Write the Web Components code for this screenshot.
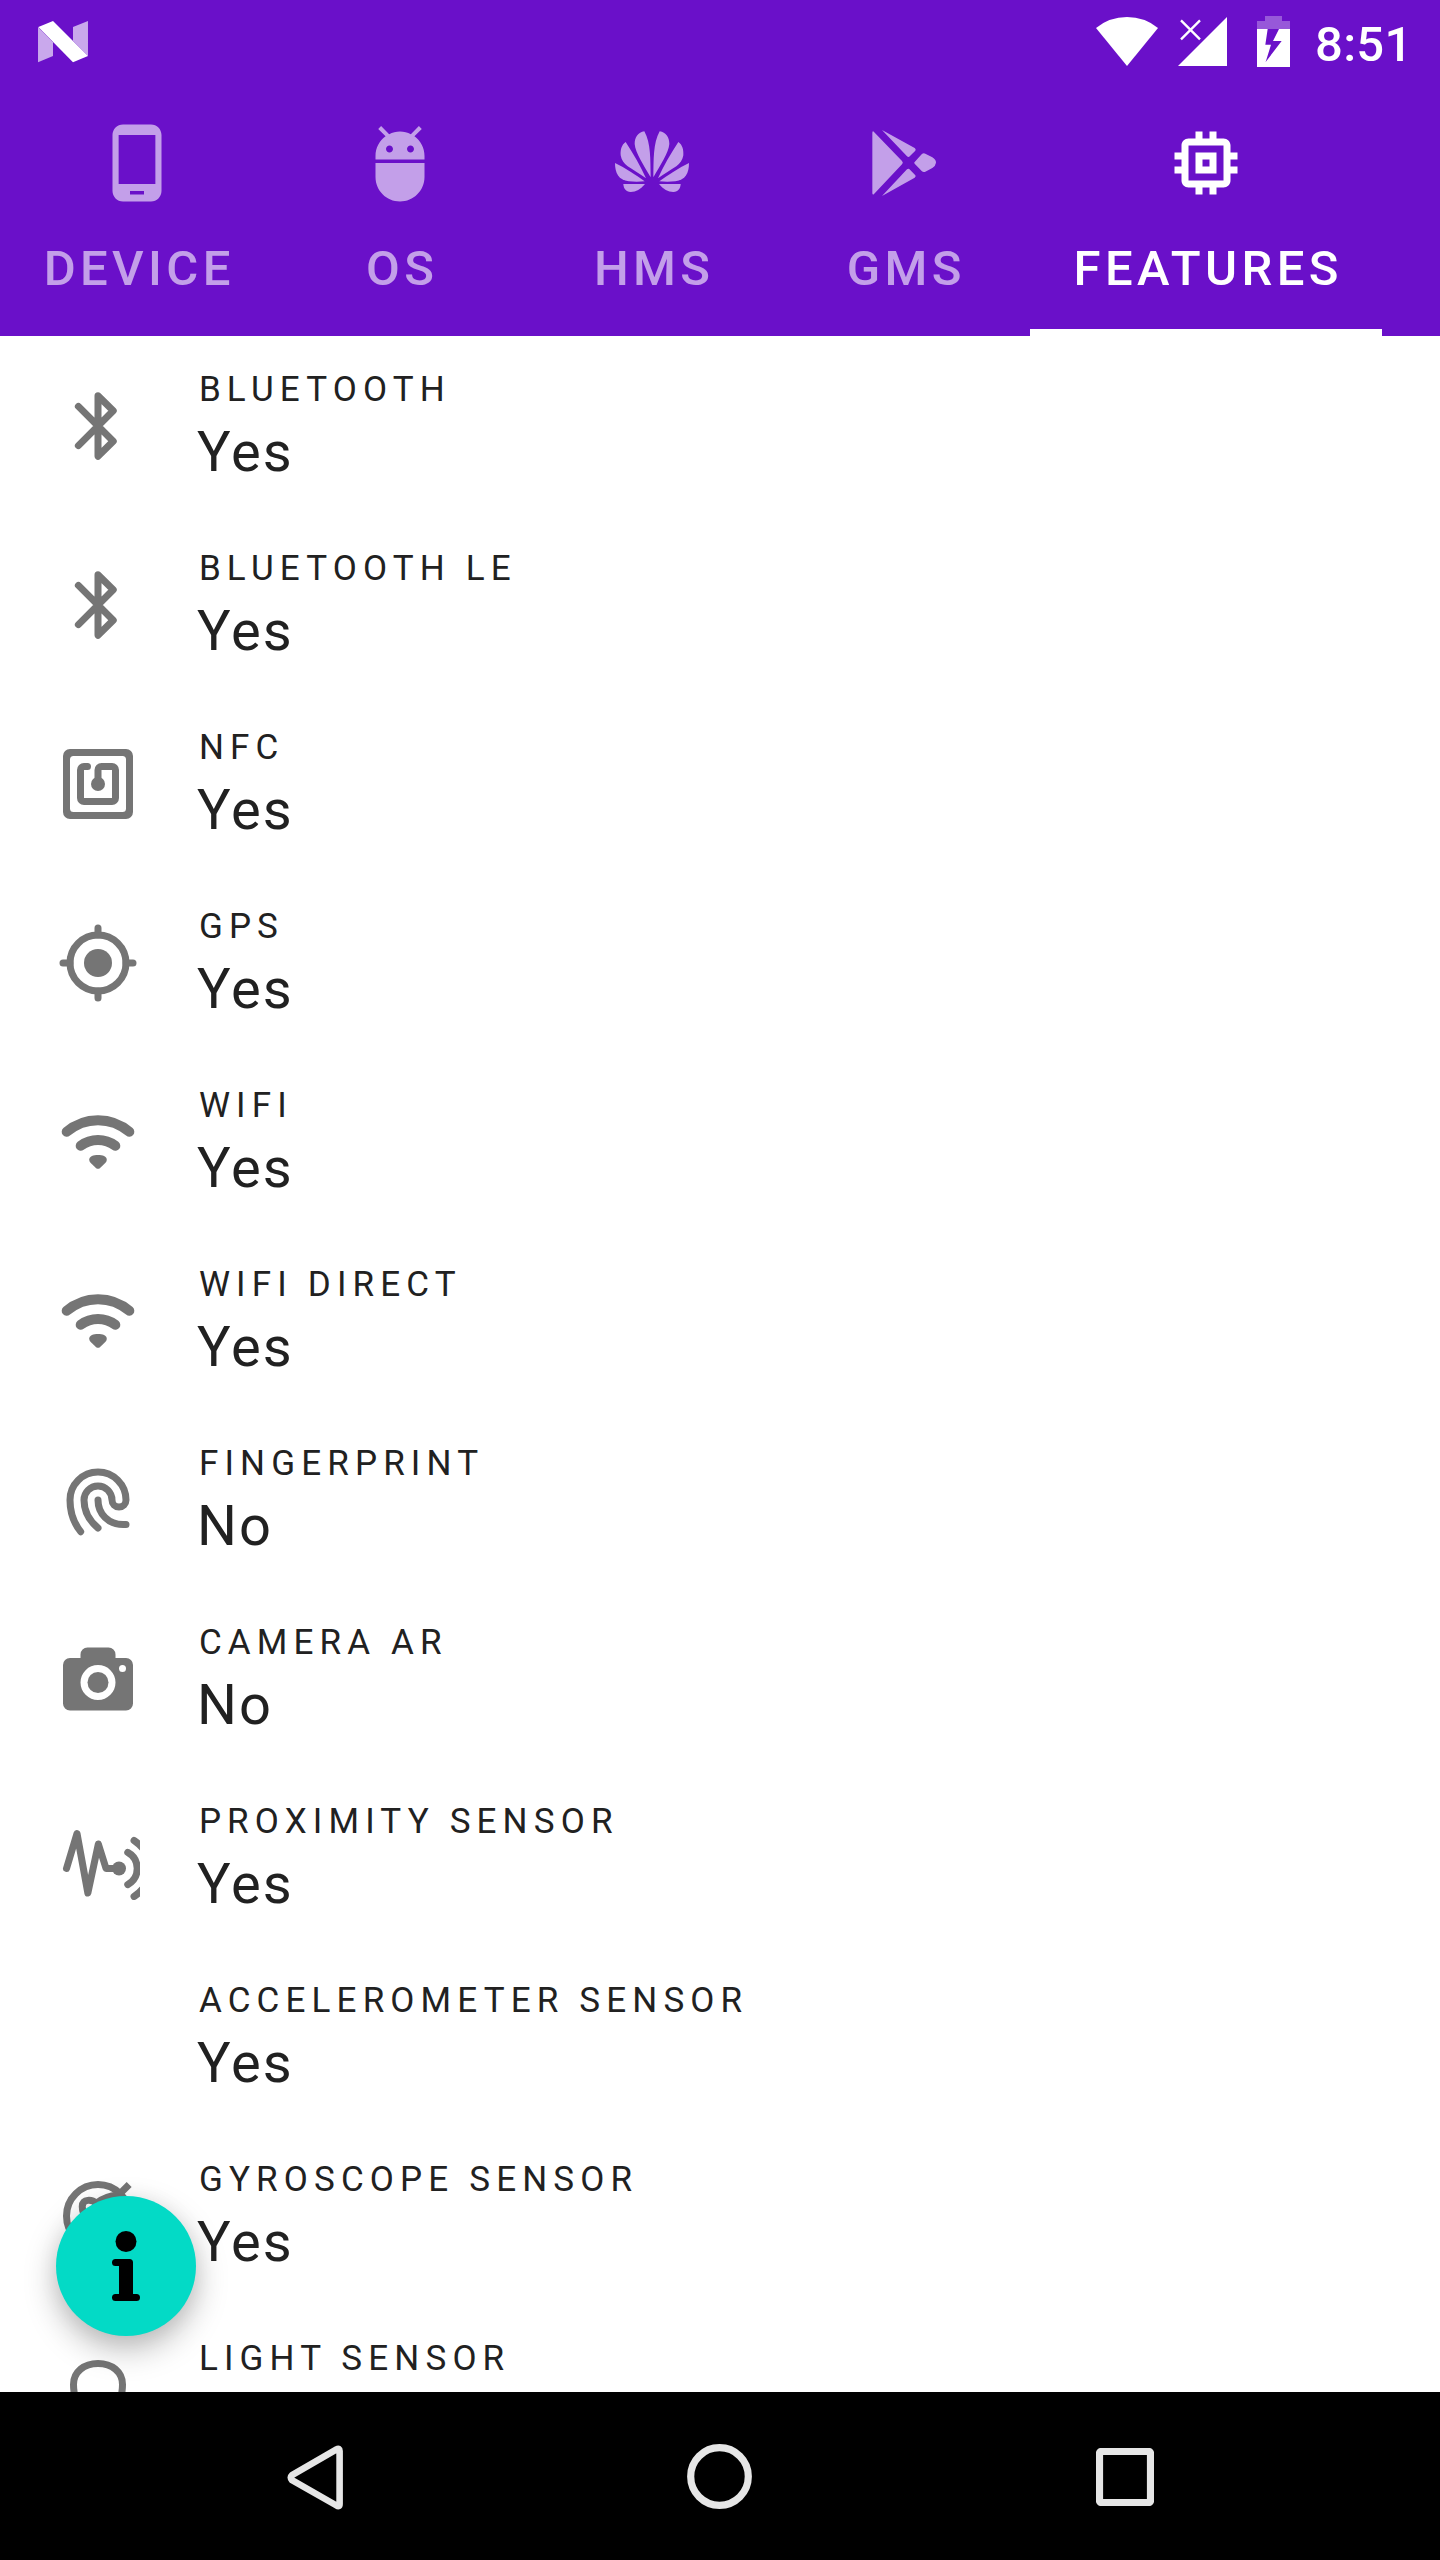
<!DOCTYPE html>
<html lang="en">
<head>
<meta charset="utf-8">
<title>Features</title>
<style>
html,body{margin:0;padding:0;background:#fff}
body{width:1440px;height:2560px;overflow:hidden;font-family:Roboto,"Noto Sans",sans-serif}
</style>
</head>
<body>
<app-screen></app-screen>
<script>
const ICONS={
phone:['0 0 24 24','<path d="M16 1H8C6.34 1 5 2.34 5 4v16c0 1.66 1.34 3 3 3h8c1.66 0 3-1.34 3-3V4c0-1.66-1.34-3-3-3zm-2 20h-4v-1h4v1zm3.25-3H6.75V4h10.5v14z"/>'],
adb:['0 0 24 24','<path d="M5 16c0 3.87 3.13 7 7 7s7-3.13 7-7v-4H5v4zM16.12 4.37l2.1-2.1-.82-.83-2.3 2.31C14.16 3.28 13.12 3 12 3s-2.16.28-3.09.75L6.6 1.44l-.82.83 2.1 2.1C6.14 5.64 5 7.68 5 10v1h14v-1c0-2.32-1.14-4.36-2.88-5.63zM9 9c-.55 0-1-.45-1-1s.45-1 1-1 1 .45 1 1-.45 1-1 1zm6 0c-.55 0-1-.45-1-1s.45-1 1-1 1 .45 1 1-.45 1-1 1z"/>'],
petals:['390 63 252 252',(()=>{const h='<path d="M493 94C474 97 464 112 464 132C466 158 492 197 511 230H512C511 180 513 130 493 94Z"/><path d="M437 126C424 135 421 150 422 166C424 180 432 191 443 199C460 210 479 222 498 235C482 198 460 162 437 126Z"/><path d="M405 189C405 220 416 240 446 244Q470 246 494 244C468 225 436 204 405 189Z"/><path d="M430 252H495C482 268 468 276 452 276C437 275 431 266 430 252Z"/>';return h+'<g transform="translate(1032 0) scale(-1 1)">'+h+'</g>'})()],
play:['1146 63 252 252','<path d="M1177 98Q1178 91 1182 96L1266 183Q1271 188 1266 193L1182 282Q1178 286 1177 280Z"/><path d="M1206 90L1304 144Q1309 148 1306 152L1290 168Q1286 173 1281 169ZM1206 288L1304 233Q1309 229 1306 226L1290 209Q1286 204 1281 208ZM1304 186L1325 163Q1330 158 1336 161L1357 172Q1368 179 1368 188Q1367 197 1357 204L1336 215Q1330 218 1325 213L1304 191Q1301 188 1304 186Z"/>'],
memory:['0 0 24 24','<path d="M15 9H9v6h6V9zm-2 4h-2v-2h2v2zm8-2V9h-2V7c0-1.1-.9-2-2-2h-2V3h-2v2h-2V3H9v2H7c-1.1 0-2 .9-2 2v2H3v2h2v2H3v2h2v2c0 1.1.9 2 2 2h2v2h2v-2h2v2h2v-2h2c1.1 0 2-.9 2-2v-2h2v-2h-2v-2h2zm-4 6H7V7h10v10z"/>'],
bluetooth:['0 0 24 24','<path class="s" d="M6.4 6.4L16.35 16.35L12 20.65V3.35L16.35 7.65L6.4 17.6"/>'],
nfc:['0 0 24 24','<path fill-rule="evenodd" d="M4 2H20a2 2 0 0 1 2 2V20a2 2 0 0 1-2 2H4a2 2 0 0 1-2-2V4a2 2 0 0 1 2-2ZM5 4a1 1 0 0 0-1 1V19a1 1 0 0 0 1 1H19a1 1 0 0 0 1-1V5a1 1 0 0 0-1-1Z"/><path class="s" d="M9 7H8a1 1 0 0 0-1 1v8a1 1 0 0 0 1 1h8a1 1 0 0 0 1-1V8a1 1 0 0 0-1-1h-3a1 1 0 0 0-1 1v4"/><circle cx="12" cy="12" r="2"/>'],
gps:['0 0 24 24','<circle class="s" cx="12" cy="12" r="8"/><circle cx="12" cy="12" r="4"/><path class="s" d="M12 2v2M12 20v2M2 12h2M20 12h2"/>'],
wifi:['0 0 24 24','<path class="s" style="stroke-width:2.85" d="M3.05 9.1A13.66 13.66 0 0 1 20.95 9.1M7.05 13.1A8.29 8.29 0 0 1 16.95 13.1"/><path d="M12 15.7C13.3 15.7 14.5 16.1 14.5 17C14.5 17.5 14.3 17.8 14 18.1L12.6 19.4Q12 19.9 11.4 19.4L10 18.1C9.7 17.8 9.5 17.5 9.5 17C9.5 16.1 10.7 15.7 12 15.7Z"/>'],
fingerprint:['0 0 24 24','<path class="s" d="M7.05 21.05C5 18.5 4 15.3 4 12A8 8 0 0 1 20 12A2 2 0 0 1 16 12A4 4 0 0 0 8 12C8 15.3 9.6 18 12 20M12 12C12 16 15 19 19.2 19H20"/>'],
camera:['0 0 24 24','<path fill-rule="evenodd" d="M9 3h6a2 2 0 0 1 2 2v1h3a2 2 0 0 1 2 2v11a2 2 0 0 1-2 2H4a2 2 0 0 1-2-2V8a2 2 0 0 1 2-2h3V5a2 2 0 0 1 2-2ZM12 8a5 5 0 0 0 0 10a5 5 0 0 0 0-10ZM19 8a1 1 0 0 0 0 2a1 1 0 0 0 0-2Z"/><circle cx="12" cy="13" r="3"/>'],
proximity:['0 0 24 24','<path class="s" d="M3 15L6 5L9.1 22L12.1 8L14.3 15H18M20.5 10.4A5.27 5.27 0 0 1 20.5 19.6M22.3 7Q25 8.8 26.5 12M22.3 23Q25 21.2 26.5 18"/><circle cx="18" cy="15" r="2"/>'],
gyro:['0 0 24 24','<circle class="s" cx="12" cy="12" r="9"/><path class="s" style="stroke-linecap:butt" d="M20.9 3L18 5.900C15 6.200 13 7 11.500 8.400C10.300 7.200 7.500 7 7.500 9.300C7.500 12 10 15 13 16"/>'],
bulb:['0 0 24 24','<path class="s" d="M8.5 17C6 15 5 12.500 5 9C5 5.400 8 3 12 3S19 5.400 19 9C19 12.500 18 15 15.500 17"/>'],
info:['0 0 24 24','<circle cx="12" cy="5" r="3"/><path d="M9 10H13a1 1 0 0 1 1 1V20h1a1 1 0 0 1 0 2H9a1 1 0 0 1 0-2h1V12H9a1 1 0 0 1 0-2Z"/>'],
nougat:['114 64 150 124','<path opacity=".64" d="M114 82L159 128V169L114 188ZM219 82L264 64V169L219 123Z"/><path d="M115 82L159 64L264 169L219 188Z"/>'],
signalwifi:['288 51 186 147','<path d="M288 84Q328 51 381 51T474 84L381 198Z"/>'],
cell:['534 51 147 147','<path d="M534 198L681 51V198Z"/><path fill="none" stroke="currentColor" stroke-width="7" d="M543 61L600 118M600 61L543 118"/>'],
battery:['771 48 99 153','<path opacity=".3" d="M795 48H846V63H870V87H771V63H795Z"/><path fill-rule="evenodd" d="M771 87H870V201H771ZM803 87L796 134H813L797 186L845 123H819L837 87Z"/>'],
back:['0 0 56 66','<path class="n" style="stroke-width:6.6" d="M52.600 7V60Q52.600 63.500 49.500 61.500L5 36.200Q2.500 33.500 5 31.200L49.500 5.300Q52.600 3.500 52.600 7Z"/>'],
home:['0 0 65 65','<circle class="n" cx="32.500" cy="32.500" r="28.800"/>'],
recents:['0 0 58 58','<rect class="n" x="3.500" y="3.500" width="51" height="51" rx="1.500"/>']
};
class BaseElement extends HTMLElement{
  connectedCallback(){
    if(this.shadowRoot)return;
    this.attachShadow({mode:'open'}).innerHTML='<style>'+this.css()+'</style>'+this.html();
  }
}
customElements.define('app-icon',class extends BaseElement{
  css(){return `:host{display:block;flex:none;width:84px;height:84px}svg{display:block;width:100%;height:100%;fill:currentColor}.s{fill:none;stroke:currentColor;stroke-width:2;stroke-linecap:round;stroke-linejoin:round}.n{fill:none;stroke:currentColor;stroke-width:7.2;stroke-linejoin:round}`}
  html(){const i=ICONS[this.getAttribute('name')];return i?`<svg viewBox="${i[0]}" aria-hidden="true">${i[1]}</svg>`:''}
});
customElements.define('status-bar',class extends BaseElement{
  css(){return `:host{display:flex;height:84px;box-sizing:border-box;padding:0 37px 0 38px;color:#fff}
.n{width:50px;height:41.300px;margin-top:21.300px}.r{display:flex;margin-left:auto}
.w{width:62px;height:49px;margin-top:17px}.c{width:49px;height:49px;margin:17px 0 0 20px}.b{width:33px;height:51px;margin:16px 0 0 30px}
time{font-size:49px;font-weight:500;line-height:58px;letter-spacing:.3px;margin:16px 0 0 25px;width:88px;white-space:nowrap}`}
  html(){return `<app-icon class="n" name="nougat"></app-icon><div class="r"><app-icon class="w" name="signalwifi"></app-icon><app-icon class="c" name="cell"></app-icon><app-icon class="b" name="battery"></app-icon><time>8:51</time></div>`}
});
customElements.define('tab-item',class extends BaseElement{
  css(){return `:host{display:flex;flex-direction:column;align-items:center;box-sizing:border-box;flex:none;width:252px;height:252px;padding-top:37px;color:rgba(255,255,255,.6)}
:host([selected]){color:#fff;border-bottom:7px solid #fff}
span{display:block;margin-top:35px;font-size:49px;line-height:58px;font-weight:500;letter-spacing:4.375px;padding-left:2.200px;margin-right:-2.200px;white-space:nowrap}`}
  html(){return `<app-icon name="${this.getAttribute('icon')}"></app-icon><span><slot></slot></span>`}
});
customElements.define('tab-strip',class extends BaseElement{
  css(){return `:host{display:flex;height:252px}`}
  html(){return `<slot></slot>`}
});
customElements.define('feature-row',class extends BaseElement{
  css(){return `:host{display:flex;align-items:center;height:179px;flex:none;padding-left:56px;color:#212121}
app-icon{color:#757575;margin-right:56px}
.t{display:flex;flex-direction:column;height:179px}
.l{font-size:35px;line-height:42px;letter-spacing:6.150px;padding-left:2.900px;margin-top:33px;white-space:nowrap}
.v{font-size:56px;line-height:66px;letter-spacing:2.150px;padding-left:.9px;margin-top:8px}`}
  html(){return `<app-icon name="${this.getAttribute('icon')||''}"></app-icon><div class="t"><div class="l"><slot name="label"></slot></div><div class="v"><slot></slot></div></div>`}
});
customElements.define('info-button',class extends BaseElement{
  css(){return `:host{position:absolute;left:56px;bottom:56px;display:flex;align-items:center;justify-content:center;width:140px;height:140px;border-radius:50%;background:#03dac6;color:#000;box-shadow:0 13px 32px rgba(0,0,0,.27),0 2px 22px rgba(0,0,0,.06)}`}
  html(){return `<app-icon name="info"></app-icon>`}
});
customElements.define('nav-bar',class extends BaseElement{
  css(){return `:host{display:flex;height:168px;background:#000;color:#e6e6e6;align-items:center;justify-content:space-between;padding:1px 286px 0 287px;box-sizing:border-box}
.b{width:56px;height:66px}.h{width:65px;height:65px}.r{width:58px;height:58px}`}
  html(){return `<app-icon class="b" name="back"></app-icon><app-icon class="h" name="home"></app-icon><app-icon class="r" name="recents"></app-icon>`}
});
customElements.define('app-screen',class extends BaseElement{
  css(){return `:host{display:flex;flex-direction:column;width:1440px;height:2560px}
header{background:#6a10c9;height:336px;flex:none}
main{position:relative;flex:1;min-height:0;overflow:hidden;display:flex;flex-direction:column;background:#fff}
tab-item:first-child{width:274px}tab-item:last-child{width:352px}nav-bar{flex:none}`}
  html(){
    const tabs=[['phone','DEVICE'],['adb','OS'],['petals','HMS'],['play','GMS'],['memory','FEATURES']];
    const rows=[['bluetooth','BLUETOOTH','Yes'],['bluetooth','BLUETOOTH LE','Yes'],['nfc','NFC','Yes'],['gps','GPS','Yes'],['wifi','WIFI','Yes'],['wifi','WIFI DIRECT','Yes'],['fingerprint','FINGERPRINT','No'],['camera','CAMERA AR','No'],['proximity','PROXIMITY SENSOR','Yes'],['','ACCELEROMETER SENSOR','Yes'],['gyro','GYROSCOPE SENSOR','Yes'],['bulb','LIGHT SENSOR','']];
    return `<header><status-bar></status-bar><tab-strip>${tabs.map(([i,t],k)=>`<tab-item icon="${i}"${k===4?' selected':''}>${t}</tab-item>`).join('')}</tab-strip></header>
<main>${rows.map(([i,l,v])=>`<feature-row icon="${i}"><span slot="label">${l}</span>${v}</feature-row>`).join('')}<info-button></info-button></main><nav-bar></nav-bar>`}
});
</script>
</body>
</html>
